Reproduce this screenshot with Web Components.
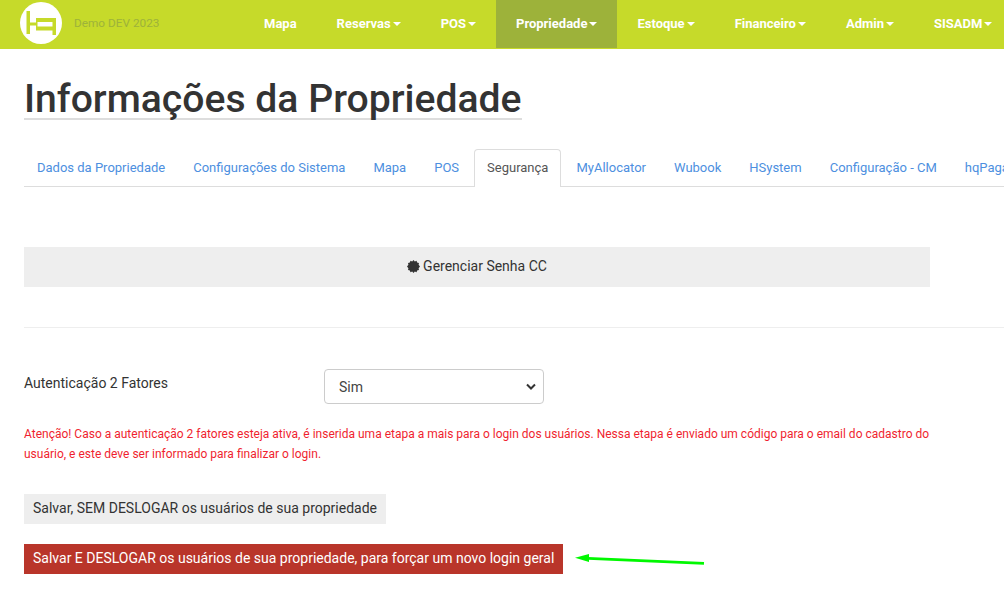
<!DOCTYPE html>
<html lang="pt-BR">
<head>
<meta charset="utf-8">
<title>Informações da Propriedade</title>
<style>
  html, body { margin: 0; padding: 0; height: 100%; overflow: hidden; background: #fff; }
  body { font-family: Roboto, "Liberation Sans", sans-serif; color: #333; }
</style>
</head>
<body>
<app-navbar brand="Demo DEV 2023">
  <nav-item>Mapa</nav-item>
  <nav-item caret>Reservas</nav-item>
  <nav-item caret>POS</nav-item>
  <nav-item caret active>Propriedade</nav-item>
  <nav-item caret>Estoque</nav-item>
  <nav-item caret>Financeiro</nav-item>
  <nav-item caret>Admin</nav-item>
  <nav-item caret>SISADM</nav-item>
</app-navbar>
<property-page heading="Informações da Propriedade">
  <tab-bar slot="tabs">
    <tab-item>Dados da Propriedade</tab-item>
    <tab-item>Configurações do Sistema</tab-item>
    <tab-item>Mapa</tab-item>
    <tab-item>POS</tab-item>
    <tab-item active>Segurança</tab-item>
    <tab-item>MyAllocator</tab-item>
    <tab-item>Wubook</tab-item>
    <tab-item>HSystem</tab-item>
    <tab-item>Configuração - CM</tab-item>
    <tab-item>hqPagar</tab-item>
  </tab-bar>
  <security-panel></security-panel>
</property-page>

<script>
class AppNavbar extends HTMLElement {
  connectedCallback() {
    this.attachShadow({ mode: 'open' });
    this.shadowRoot.innerHTML = `
      <style>
        :host { display: flex; height: 49px; background: #c6da2a; overflow: hidden; }
        .brand { flex: 0 0 244px; display: flex; align-items: center; box-sizing: border-box; padding-left: 20px; }
        .logo { display: block; width: 42px; height: 42px; margin-top: -3px; }
        .name { margin: -3px 0 0 12px; font-size: 11.8px; color: #9db23a; }
        nav { display: flex; flex: none; }
      </style>
      <div class="brand">
        <svg class="logo" viewBox="0 0 42 42">
          <circle cx="21" cy="21" r="21" fill="#fff"/>
          <path d="M6.500 9H10v11.500h6V16h20v17h-3.500v-4.500H16v-5h-6V32H6.500z M17.500 20v4.500h15V20z" fill="#c6da2a" fill-rule="evenodd"/>
        </svg>
        <span class="name">${this.getAttribute('brand')}</span>
      </div>
      <nav><slot></slot></nav>
    `;
  }
}
customElements.define('app-navbar', AppNavbar);

class NavItem extends HTMLElement {
  connectedCallback() {
    this.attachShadow({ mode: 'open' });
    this.shadowRoot.innerHTML = `
      <style>
        :host { display: flex; align-items: center; height: 48px; padding: 0 20px 2px; box-sizing: border-box; flex: none;
                font-size: 13px; font-weight: 700; color: #fff; }
        :host([active]) { background: #9db23a; }
        .caret { width: 0; height: 0; margin-left: 2px; margin-top: 2px; border-top: 4px solid #fff;
                 border-left: 4px solid transparent; border-right: 4px solid transparent; }
      </style>
      <slot></slot>${this.hasAttribute('caret') ? '<span class="caret"></span>' : ''}
    `;
  }
}
customElements.define('nav-item', NavItem);

class PropertyPage extends HTMLElement {
  connectedCallback() {
    this.attachShadow({ mode: 'open' });
    this.shadowRoot.innerHTML = `
      <style>
        :host { display: block; padding: 0 0 0 24px; }
        h1 { display: inline-block; margin: 31px 0 0; font-size: 39.13px; font-weight: 500; line-height: 38px;
             color: #333; border-bottom: 2px solid #ddd; }
        .tabs { margin-top: 29px; }
      </style>
      <h1>${this.getAttribute('heading')}</h1>
      <div class="tabs"><slot name="tabs"></slot></div>
      <slot></slot>
    `;
  }
}
customElements.define('property-page', PropertyPage);

class TabBar extends HTMLElement {
  connectedCallback() {
    this.attachShadow({ mode: 'open' });
    this.shadowRoot.innerHTML = `
      <style>
        :host { display: flex; height: 38px; box-shadow: inset 0 -1px #ddd; overflow: hidden; }
      </style>
      <slot></slot>
    `;
  }
}
customElements.define('tab-bar', TabBar);

class TabItem extends HTMLElement {
  connectedCallback() {
    this.attachShadow({ mode: 'open' });
    this.shadowRoot.innerHTML = `
      <style>
        :host { display: block; flex: none; height: 37px; box-sizing: border-box; margin-right: 2px; padding: 0 12px;
                border: 1px solid transparent; border-bottom: 0; border-radius: 4px 4px 0 0;
                font-size: 13px; line-height: 35px; color: #4d8fe0; }
        :host([active]) { color: #555; border-color: #ddd; height: 38px; background: #fff; }
      </style>
      <slot></slot>
    `;
  }
}
customElements.define('tab-item', TabItem);

class SecurityPanel extends HTMLElement {
  connectedCallback() {
    this.attachShadow({ mode: 'open' });
    this.shadowRoot.innerHTML = `
      <style>
        :host { display: block; position: relative; padding-top: 60px; font-size: 14px; color: #333; }
        .manage { width: 906px; height: 40px; box-sizing: border-box; padding-bottom: 2px; display: flex; align-items: center;
                  justify-content: center; gap: 3px; background: #eee; font-size: 14px; }
        .manage svg { width: 13px; height: 13px; }
        hr { height: 1px; margin: 40px 0 0; border: 0; background: #eee; }
        .row { display: flex; margin-top: 41px; }
        label { flex: 0 0 300px; padding-top: 6px; font-size: 14px; line-height: 16px; }
        .select { width: 220px; height: 35px; box-sizing: border-box; padding-left: 14px; padding-right: 7px; display: flex;
                  align-items: center; justify-content: space-between; border: 1px solid #ccc; border-radius: 4px;
                  font-size: 14px; color: #444; }
        .select svg { width: 10px; height: 7px; }
        .warn { width: 920px; margin: 20px 0 0; font-size: 12px; line-height: 20px; color: #f01f2f; }
        .btn { display: block; width: max-content; height: 30px; box-sizing: border-box; padding: 0 9px;
               font-size: 14px; line-height: 29px; }
        .plain { margin-top: 30px; background: #eee; color: #333; }
        .danger { margin-top: 20px; background: #b9352a; color: #fff; }
        .arrow { position: absolute; left: 546px; top: 358px; width: 140px; height: 30px; }
      </style>
      <div class="manage">
        <svg viewBox="0 0 14 14"><path fill="#333" d="M7 0l1.400 1.500L10.300.9l.6 1.900 2 .3-.4 2L14 7l-1.500 1.900.4 1.900-2 .4-.6 1.900-1.900-.6L7 14l-1.400-1.500-1.900.6-.6-1.900-2-.4.4-1.900L0 7l1.500-1.900-.4-2 2-.3.6-1.900 1.900.6z"/></svg>
        <span>Gerenciar Senha CC</span>
      </div>
      <hr>
      <div class="row">
        <label>Autenticação 2 Fatores</label>
        <div class="select">
          <span>Sim</span>
          <svg viewBox="0 0 10 7"><path d="M1 1.500l4 4 4-4" fill="none" stroke="#333" stroke-width="2"/></svg>
        </div>
      </div>
      <p class="warn">Atenção! Caso a autenticação 2 fatores esteja ativa, é inserida uma etapa a mais para o login dos usuários. Nessa etapa é enviado um código para o email do cadastro do usuário, e este deve ser informado para finalizar o login.</p>
      <div class="btn plain">Salvar, SEM DESLOGAR os usuários de sua propriedade</div>
      <div class="btn danger">Salvar E DESLOGAR os usuários de sua propriedade, para forçar um novo login geral</div>
      <svg class="arrow" viewBox="0 0 140 30">
        <path d="M134 18.400L18 13.300" stroke="#00f800" stroke-width="2.800" fill="none"/>
        <path d="M5 12.700L19 9v8z" fill="#00f800"/>
      </svg>
    `;
  }
}
customElements.define('security-panel', SecurityPanel);
</script>
</body>
</html>
